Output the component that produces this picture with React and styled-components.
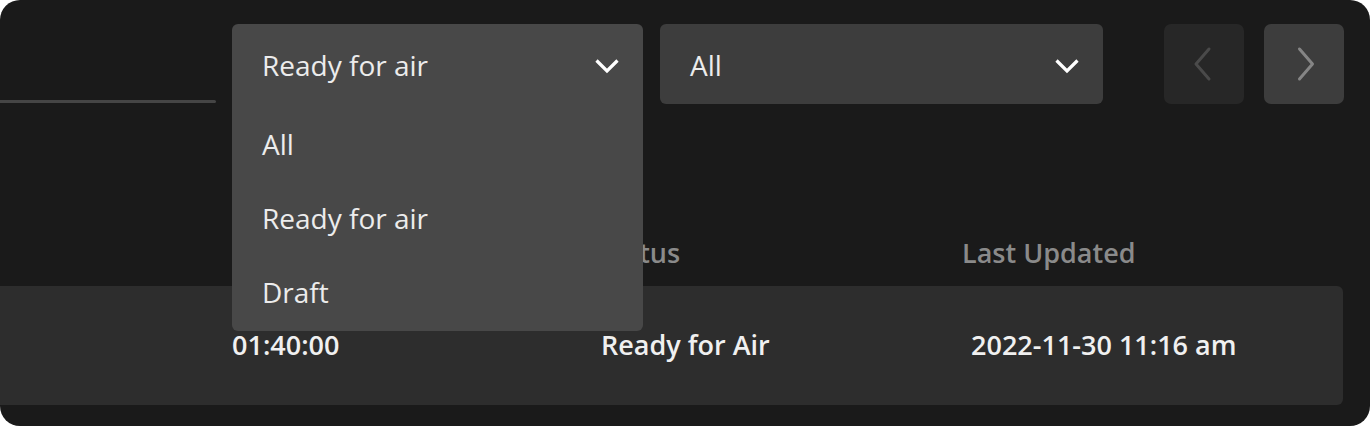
import React from "react";
import styled, { createGlobalStyle } from "styled-components";

const Global = createGlobalStyle`
  html, body { margin: 0; padding: 0; background: #ffffff; }
  * { box-sizing: border-box; }
`;

const Card = styled.div`
  width: 1370px;
  height: 426px;
  background: #1a1a1a;
  border-radius: 20px;
  overflow: hidden;
  font-family: "Open Sans", "Liberation Sans", sans-serif;
  color: #ececec;
  display: flex;
  flex-direction: column;
`;

const Toolbar = styled.div`
  display: flex;
  align-items: stretch;
  height: 80px;
  margin-top: 24px;
`;

const TabSlot = styled.div`
  width: 216px;
  display: flex;
  align-items: flex-end;
  padding-bottom: 1px;
  margin-right: 16px;
`;

const TabBar = styled.div`
  width: 100%;
  height: 3px;
  background: #454545;
  border-radius: 0 2px 2px 0;
`;

const SelectWrap = styled.div`
  position: relative;
  width: ${(p) => p.$w}px;
  margin-right: ${(p) => p.$mr}px;
`;

const SelectBox = styled.div`
  height: 100%;
  display: flex;
  align-items: center;
  justify-content: space-between;
  padding: 4px 23px 0 30px;
  background: ${(p) => (p.$open ? "#484848" : "#3d3d3d")};
  border-radius: ${(p) => (p.$open ? "6px 6px 0 0" : "6px")};
  font-size: 28px;
  line-height: 1.2;
  color: #ececec;
`;

const Menu = styled.div`
  position: absolute;
  top: 100%;
  left: 0;
  right: 0;
  height: 227px;
  background: #484848;
  border-radius: 0 0 6px 6px;
  padding-top: 4px;
  z-index: 5;
`;

const Option = styled.div`
  height: 74px;
  display: flex;
  align-items: center;
  padding-left: 30px;
  font-size: 28px;
  line-height: 1.2;
  color: #ececec;
`;

const NavButton = styled.div`
  width: 80px;
  margin-right: ${(p) => p.$mr}px;
  border-radius: 7px;
  background: ${(p) => (p.$disabled ? "#272727" : "#3d3d3d")};
  color: ${(p) => (p.$disabled ? "#4a4a4a" : "#858585")};
  display: flex;
  align-items: center;
  justify-content: center;
`;

const Table = styled.div`
  margin-top: 129px;
  margin-right: 27px;
  display: flex;
  flex-direction: column;
  gap: 13px;
`;

const HeaderRow = styled.div`
  height: 40px;
  display: grid;
  grid-template-columns: 598px 364px 1fr;
  align-items: center;
  font-size: 27px;
  line-height: 1.2;
  font-weight: 600;
  color: #8a8a8a;
`;

const DataRow = styled.div`
  height: 119px;
  display: grid;
  grid-template-columns: 232px 369px 370px 1fr;
  align-items: center;
  background: #2d2d2d;
  border-radius: 0 6px 6px 0;
  font-size: 27px;
  line-height: 1.2;
  font-weight: 600;
  color: #f0f0f0;
`;

const Cell = styled.div`
  white-space: nowrap;
`;

const ChevronDown = () => (
  <svg width="26" height="18" viewBox="0 0 26 18" fill="none">
    <path d="M2.5 3.5 L13 14 L23.5 3.5" stroke="#ffffff" strokeWidth="3.2" strokeLinejoin="miter" />
  </svg>
);

const ChevronSide = ({ dir }) => (
  <svg width="22" height="36" viewBox="0 0 22 36" fill="none">
    <path
      d={dir === "left" ? "M16 3 L3 18 L16 33" : "M6.5 3 L19.5 18 L6.5 33"}
      stroke="currentColor"
      strokeWidth="3"
      strokeLinecap="round"
      strokeLinejoin="round"
    />
  </svg>
);

export default function App() {
  return (
    <>
      <Global />
      <Card>
        <Toolbar>
          <TabSlot>
            <TabBar />
          </TabSlot>
          <SelectWrap $w={411} $mr={17}>
            <SelectBox $open>
              <span>Ready for air</span>
              <ChevronDown />
            </SelectBox>
            <Menu>
              <Option>All</Option>
              <Option>Ready for air</Option>
              <Option>Draft</Option>
            </Menu>
          </SelectWrap>
          <SelectWrap $w={443} $mr={61}>
            <SelectBox>
              <span>All</span>
              <ChevronDown />
            </SelectBox>
          </SelectWrap>
          <NavButton $disabled $mr={20}>
            <ChevronSide dir="left" />
          </NavButton>
          <NavButton $mr={0}>
            <ChevronSide dir="right" />
          </NavButton>
        </Toolbar>
        <Table>
          <HeaderRow>
            <Cell />
            <Cell>Status</Cell>
            <Cell>Last Updated</Cell>
          </HeaderRow>
          <DataRow>
            <Cell />
            <Cell>01:40:00</Cell>
            <Cell>Ready for Air</Cell>
            <Cell>2022-11-30 11:16 am</Cell>
          </DataRow>
        </Table>
      </Card>
    </>
  );
}
